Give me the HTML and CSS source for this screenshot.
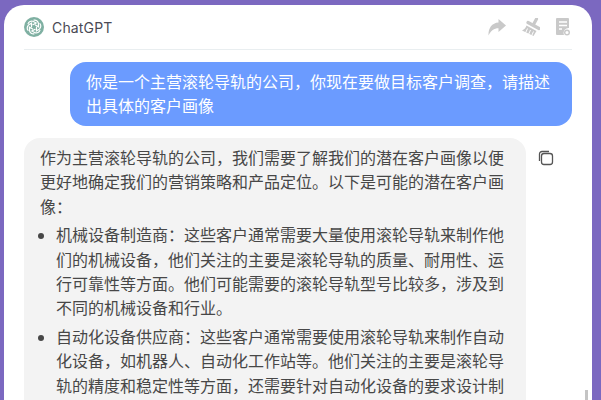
FILE: index.html
```html
<!DOCTYPE html>
<html lang="zh">
<head>
<meta charset="utf-8">
<title>ChatGPT</title>
<link rel="stylesheet" href="styles.css">
</head>
<body>
<div class="window">
  <header class="top">
    <div class="brand">
      <svg class="logo" width="20" height="20" viewBox="0 0 20 20">
        <circle cx="10" cy="10" r="10" fill="#7fb0a2"/>
        <g fill="none" stroke="#fff" stroke-width="1.2" stroke-linecap="round">
          <path d="M10 3.2c2-.4 4 1 4.4 3l.2 3.6-3.2-1.9"/>
          <path d="M10 3.2c2-.4 4 1 4.4 3l.2 3.6-3.2-1.9" transform="rotate(60 10 10)"/>
          <path d="M10 3.2c2-.4 4 1 4.4 3l.2 3.6-3.2-1.9" transform="rotate(120 10 10)"/>
          <path d="M10 3.2c2-.4 4 1 4.4 3l.2 3.6-3.2-1.9" transform="rotate(180 10 10)"/>
          <path d="M10 3.2c2-.4 4 1 4.4 3l.2 3.6-3.2-1.9" transform="rotate(240 10 10)"/>
          <path d="M10 3.2c2-.4 4 1 4.4 3l.2 3.6-3.2-1.9" transform="rotate(300 10 10)"/>
        </g>
      </svg>
      <span class="name">ChatGPT</span>
    </div>
    <div class="tools">
      <svg class="tool" width="18" height="18" viewBox="0 0 18 18"><path d="M10.500 1 18 7.500 10.500 14V10.200C6 10.200 3 12.500 .5 17.500 .2 10 4 5 10.500 4.600z" fill="#c9c9c9"/></svg>
      <svg class="tool" width="18" height="18" viewBox="0 0 18 18"><path d="M14.500 1 11.500 6.500" stroke="#c9c9c9" stroke-width="3.200" stroke-linecap="round"/><path d="M6 4.500 17 10.500" stroke="#c9c9c9" stroke-width="3.200" stroke-linecap="round"/><path d="M4.500 7.500 14.500 13 11.500 18 0 12.500C2.500 11.500 3.800 9.800 4.500 7.500z" fill="#c9c9c9"/><path d="M5.500 10.500 3.500 15M8.500 12 6.500 16.500M11.500 13.500 9.500 18" stroke="#fff" stroke-width="1"/></svg>
      <svg class="tool" width="14" height="18" viewBox="0 0 14 18"><path d="M1 0h11a1 1 0 0 1 1 1v9a5 5 0 0 0-5 7H1a1 1 0 0 1-1-1V1a1 1 0 0 1 1-1z" fill="#c9c9c9"/><path d="M3 4h8M3 7.500h8M3 11h3" stroke="#fff" stroke-width="1.400"/><circle cx="11" cy="14.500" r="2.300" fill="none" stroke="#c9c9c9" stroke-width="1.400"/></svg>
    </div>
  </header>
  <div class="chat">
    <div class="user">你是一个主营滚轮导轨的公司，你现在要做目标客户调查，请描述出具体的客户画像</div>
    <div class="reply">
      <div class="bubble">
        <p>作为主营滚轮导轨的公司，我们需要了解我们的潜在客户画像以便更好地确定我们的营销策略和产品定位。以下是可能的潜在客户画像：</p>
        <ul>
          <li>机械设备制造商：这些客户通常需要大量使用滚轮导轨来制作他们的机械设备，他们关注的主要是滚轮导轨的质量、耐用性、运行可靠性等方面。他们可能需要的滚轮导轨型号比较多，涉及到不同的机械设备和行业。</li>
          <li>自动化设备供应商：这些客户通常需要使用滚轮导轨来制作自动化设备，如机器人、自动化工作站等。他们关注的主要是滚轮导轨的精度和稳定性等方面，还需要针对自动化设备的要求设计制造。</li>
        </ul>
      </div>
      <svg class="copy" width="16" height="16" viewBox="0 0 16 16" fill="none" stroke="#555" stroke-width="1.300"><rect x="3.500" y="3.500" width="11" height="11" rx="2.500"/><path d="M1.500 11V4a2.500 2.500 0 0 1 2.500-2.500h7"/></svg>
    </div>
  </div>
  <div class="thumb"></div>
</div>
</body>
</html>
```
FILE: styles.css
```css
html, body { margin: 0; height: 100%; overflow: hidden; }
body { background: #7b68c0; padding: 5px 9px 0 4px; box-sizing: border-box; font-family: Inter, "Noto Sans CJK SC", sans-serif; }
.window { position: relative; background: #fff; border-radius: 20px 20px 0 0; height: 100%; padding: 0 20px; box-sizing: border-box; overflow: hidden; }
.top { display: flex; justify-content: space-between; align-items: center; height: 44px; border-bottom: 1px solid #e9eef0; }
.brand { display: flex; align-items: center; gap: 8px; }
.name { font-size: 14px; color: #4a4a55; letter-spacing: 0.15px; }
.tools { display: flex; align-items: center; gap: 16px; padding-right: 2px; }
.chat { display: flex; flex-direction: column; }
.user { align-self: flex-end; width: 502px; box-sizing: border-box; margin-top: 12px; padding: 8px 16px; background: #6b9bff; color: #fff; border-radius: 16px; font-size: 16px; line-height: 24px; }
.reply { display: flex; gap: 12px; margin-top: 12px; }
.bubble { width: 502px; flex: none; box-sizing: border-box; padding: 8px 16px; background: #f3f3f3; border-radius: 16px; font-size: 16px; line-height: 24.4px; color: #474747; }
.bubble p { margin: 0 0 4px; }
.bubble ul { margin: 0; padding-left: 16px; list-style: none; }
.bubble li { position: relative; margin-bottom: 4px; }
.bubble li::before { content: ""; position: absolute; left: -18px; top: 10px; width: 6px; height: 6px; border-radius: 50%; background: #474747; }
.copy { margin-top: 12px; flex: none; }
.thumb { position: absolute; right: 4px; top: 385px; width: 3px; height: 20px; background: #c4c4c4; }
```
